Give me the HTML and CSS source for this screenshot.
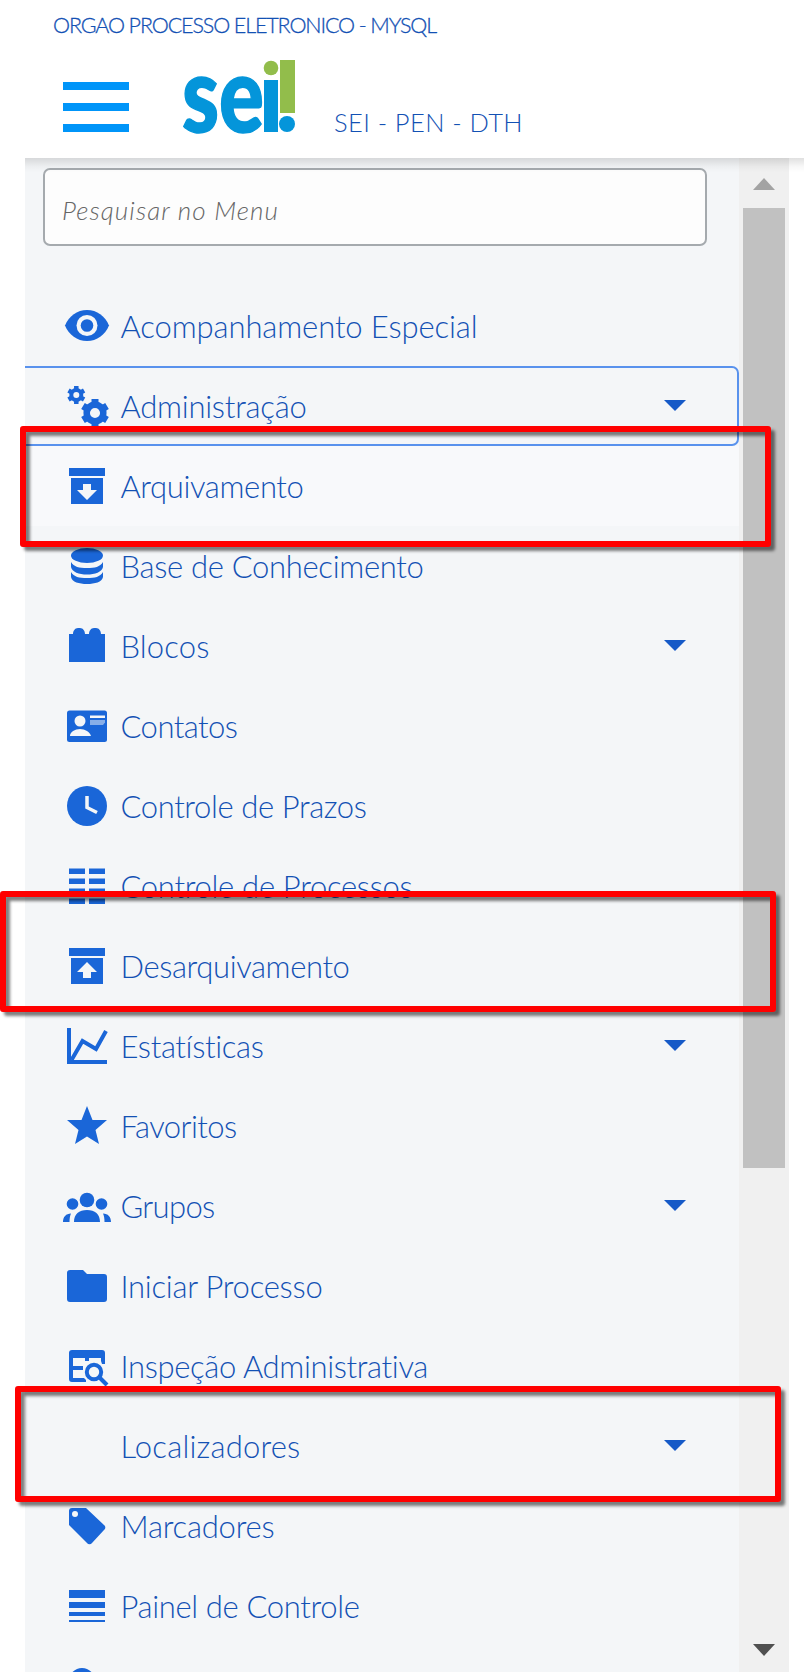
FILE: index.html
```
<!DOCTYPE html>
<html lang="pt-BR">
<head>
<meta charset="utf-8">
<title>SEI - PEN - DTH</title>
<link rel="stylesheet" href="styles.css">
</head>
<body>
<div class="page">
  <header class="header">
    <div class="org"><span data-width="383">ORGAO PROCESSO ELETRONICO - MYSQL</span></div>
    <div class="brand">
      <div class="burger"><i></i><i></i><i></i></div>
      <svg class="logo" viewBox="0 0 114 78" width="114" height="78">
        <text class="logo-text" x="-2" y="73" textLength="82" lengthAdjust="spacingAndGlyphs">se</text>
        <path fill="#0495da" d="M80 21h14v52H80z"/>
        <circle cx="87" cy="9" r="7.3" fill="#92bd4b"/>
        <path fill="#92bd4b" d="M96 1h15v53H96z"/>
        <circle cx="103" cy="65" r="8" fill="#0495da"/>
      </svg>
      <div class="system"><span data-width="189">SEI - PEN - DTH</span></div>
    </div>
  </header>
  <main class="body">
    <nav class="sidebar">
      <div class="search"><span data-width="217">Pesquisar no Menu</span></div>
      <ul class="menu">
        <li class="item"><svg class="icon" viewBox="0 0 48 48"><path d="M24 8C14 8 6 14 2 23.500C6 33 14 39 24 39S42 33 46 23.500C42 14 34 8 24 8z"/><circle class="cut" cx="24" cy="23.500" r="10.500"/><circle cx="24" cy="23.500" r="6.300"/></svg><span data-width="357">Acompanhamento Especial</span></li>
        <li class="item focused"><svg class="icon" viewBox="0 0 48 48"><circle class="ring" cx="13.300" cy="13" r="5" stroke-width="4"/><path class="teeth" stroke-width="4.500" d="M13.300 4v4M13.300 18v4M5.500 8.500l3.400 2M17.700 15.500l3.400 2M5.500 17.500l3.400-2M17.700 10.500l3.400-2"/><circle class="ring" cx="32" cy="31" r="8.300" stroke-width="6.500"/><path class="teeth" stroke-width="7" d="M32 17v6M32 39v6M20 24l5 3M39 35l5 3M20 38l5-3M39 27l5-3"/></svg><span data-width="186">Administração</span><b class="caret"></b></li>
        <li class="item active"><svg class="icon" viewBox="0 0 48 48"><path d="M6 6h36v8H6zM8 16h32v26H8z"/><path class="cut" d="M20 22h8v6h6L24 38 14 28h6z"/></svg><span data-width="183">Arquivamento</span></li>
        <li class="item"><svg class="icon" viewBox="0 0 48 48"><ellipse cx="24" cy="13.500" rx="16" ry="7.500"/><path d="M8 20c3 5 8 6 16 6s13-1 16-6v5c-1 5-8 7.500-16 7.500S9 30 8 25zM8 30c3 5 8 6 16 6s13-1 16-6v5c-1 5-8 7-16 7s-15-2-16-7z"/></svg><span data-width="303">Base de Conhecimento</span></li>
        <li class="item"><svg class="icon" viewBox="0 0 48 48"><path d="M6 12h4c0-3 2-6 5-6h2c3 0 5 3 5 6h4c0-3 2-6 5-6h2c3 0 5 3 5 6h4v28H6z"/></svg><span data-width="89">Blocos</span><b class="caret"></b></li>
        <li class="item"><svg class="icon" viewBox="0 0 48 48"><rect x="4" y="8.500" width="40" height="31.500" rx="2.500"/><circle class="cut" cx="17" cy="19" r="5.500"/><path class="cut" d="M7 34c0-4 5-7 10-7s10 3 11 7zM27 13.500h15V16H27z"/><path class="cut" opacity=".5" d="M27 18h15v2.500l-2 2.500H27z"/></svg><span data-width="117">Contatos</span></li>
        <li class="item"><svg class="icon" viewBox="0 0 48 48"><circle cx="24" cy="24" r="20"/><path class="hands" d="M24 14v11.500l10 5"/></svg><span data-width="246">Controle de Prazos</span></li>
        <li class="item"><svg class="icon" viewBox="0 0 48 48"><path d="M6 6.500h16V12H6zM26 6.500h16V12H26zM6 16.500h16V22H6zM26 16.500h16V22H26zM6 26.500h16V32H6zM26 26.500h16V32H26zM6 36.500h16V42H6zM26 36.500h16V42H26z"/></svg><span data-width="292">Controle de Processos</span></li>
        <li class="item"><svg class="icon" viewBox="0 0 48 48"><path d="M6 6h36v8H6zM8 16h32v26H8z"/><path class="cut" d="M20 36h8v-6h6L24 20 14 30h6z"/></svg><span data-width="229">Desarquivamento</span></li>
        <li class="item"><svg class="icon" viewBox="0 0 48 48"><path d="M4 6h4v32h36v4H4z"/><path class="trend" d="M8.500 38l11-19L33 27l10-18"/></svg><span data-width="144">Estatísticas</span><b class="caret"></b></li>
        <li class="item"><svg class="icon" viewBox="0 0 48 48"><path d="M24 4l5.500 14H44L32.500 28 36 42l-12-7.500L12 42l3.500-14L4 18h14.500z"/></svg><span data-width="116">Favoritos</span></li>
        <li class="item"><svg class="icon" viewBox="0 0 48 48"><circle cx="24" cy="18" r="7.300"/><circle cx="9.500" cy="22" r="5.800"/><circle cx="38.500" cy="22" r="5.800"/><path d="M11 40c0-8 5-12 13-12s13 4 13 12zM0 40c0-5 3-8.500 8-8.500-1 2-1.500 5-1.500 8.500zM48 40c0-5-3-8.500-8-8.500 1 2 1.500 5 1.500 8.500z"/></svg><span data-width="94">Grupos</span><b class="caret"></b></li>
        <li class="item"><svg class="icon" viewBox="0 0 48 48"><path d="M7 8h13l4 4h17a3 3 0 0 1 3 3v22a3 3 0 0 1-3 3H7a3 3 0 0 1-3-3V11a3 3 0 0 1 3-3z"/></svg><span data-width="202">Iniciar Processo</span></li>
        <li class="item"><svg class="icon" viewBox="0 0 48 48"><path d="M9 8h30a3 3 0 0 1 3 3v11h-3l-1-3v-3H26v3h-4v-3H10v8h10v4H10v8h11l2 2v2H9a3 3 0 0 1-3-3V11a3 3 0 0 1 3-3z"/><circle class="ring" cx="31" cy="30" r="7.200" stroke-width="4"/><path class="teeth" stroke-width="4" d="M36 35l8 8"/></svg><span data-width="308">Inspeção Administrativa</span></li>
        <li class="item"><svg class="icon" viewBox="0 0 48 48"></svg><span data-width="180">Localizadores</span><b class="caret"></b></li>
        <li class="item"><svg class="icon" viewBox="0 0 48 48"><path d="M9 6h14l18 17a3 3 0 0 1 0 5L29 41a3 3 0 0 1-5 0L6 23V9a3 3 0 0 1 3-3z"/><circle class="cut" cx="12" cy="12" r="3"/></svg><span data-width="154">Marcadores</span></li>
        <li class="item"><svg class="icon" viewBox="0 0 48 48"><path d="M6 8h36v8H6zM6 20h36v6H6zM6 30h36v4H6zM6 38h36v2H6z"/></svg><span data-width="239">Painel de Controle</span></li>
        <li class="item"><svg class="icon" viewBox="0 0 48 48"><circle class="ring" cx="19" cy="19" r="10.500" stroke-width="5"/><path class="teeth" stroke-width="5" d="M27 27l14 14"/></svg></li>
      </ul>
    </nav>
    <div class="scrollbar">
      <i class="arrow up"></i>
      <div class="thumb"></div>
      <i class="arrow down"></i>
    </div>
  </main>
  <div class="mark mark-arquivamento"></div>
  <div class="mark mark-desarquivamento"></div>
  <div class="mark mark-localizadores"></div>
</div>
<script src="fit.js"></script>
</body>
</html>
```
FILE: styles.css
```
* { box-sizing: border-box; }
body {
  margin: 0;
  background: #fff;
  color: #1351b4;
  font-family: Lato, "Open Sans", sans-serif;
  font-weight: 300;
}
.page {
  position: relative;
  width: 804px;
  height: 1672px;
  overflow: hidden;
}
.header { height: 158px; }
.org {
  height: 52px;
  padding: 9px 0 0 53px;
  font-size: 21.5px;
  line-height: 32px;
  white-space: nowrap;
  -webkit-text-stroke: .3px;
}
.brand {
  display: flex;
  align-items: flex-start;
  height: 106px;
  padding-left: 63px;
}
.burger {
  display: flex;
  flex-direction: column;
  gap: 13px;
  width: 66px;
  margin: 30px 55px 0 0;
}
.burger i { height: 8px; background: #0095f9; }
.logo { display: block; margin-top: 7px; overflow: visible; }
.logo-text {
  font: 900 104px Lato, sans-serif;
  fill: #0495da;
  stroke: #0495da;
  stroke-width: 1.5px;
}
.system {
  margin: 53px 0 0 36px;
  font-size: 25.5px;
  line-height: 34px;
  white-space: nowrap;
}
.body {
  position: relative;
  display: flex;
  height: 1514px;
  padding-left: 25px;
}
.body::before {
  content: "";
  position: absolute;
  inset: 0 0 auto 25px;
  height: 14px;
  background: linear-gradient(rgba(0,0,0,.12), rgba(0,0,0,.03) 60%, transparent);
}
.sidebar {
  width: 714px;
  padding-top: 10px;
  background: #f4f6f8;
  overflow: hidden;
}
.search {
  width: 664px;
  height: 78px;
  margin: 0 0 40px 18px;
  padding: 23px 17px 0;
  border: 2px solid #a5aaae;
  border-radius: 7px;
  background: #fdfdfd;
  color: #666;
  font-size: 26px;
  line-height: 34px;
  font-style: italic;
  white-space: nowrap;
}
.menu { margin: 0; padding: 0; list-style: none; }
.item {
  display: flex;
  align-items: center;
  height: 80px;
  padding: 0 53px 0 38px;
  font-size: 31px;
  line-height: 40px;
  white-space: nowrap;
}
.item span { margin: -1px 0 0 9.500px; }
.active { background: #f8f9fb; }
.focused {
  padding: 0 51px 0 38px;
  border: solid #5992ed;
  border-width: 2px 2px 2px 0;
  border-radius: 0 7px 7px 0;
}
.icon {
  flex: none;
  width: 48px;
  height: 48px;
  fill: #1a66d8;
}
.icon .cut { fill: #f4f6f8; }
.ring, .teeth, .trend { fill: none; stroke: #1a66d8; }
.trend { stroke-width: 4; }
.hands { fill: none; stroke: #f4f6f8; stroke-width: 3.5; }
.caret {
  margin: -2px 0 0 auto;
  border: solid transparent;
  border-width: 11px 11px 0;
  border-top-color: #1559c7;
}
.scrollbar {
  display: flex;
  flex-direction: column;
  align-items: center;
  width: 50px;
  padding: 20px 0 16px;
  background: #f0f0f0;
}
.arrow { border: solid transparent; }
.up { border-width: 0 11px 12px; border-bottom-color: #a3a3a3; }
.down { margin-top: auto; border-width: 12px 11px 0; border-top-color: #505050; }
.thumb {
  width: 42px;
  height: 960px;
  margin-top: 18px;
  background: #c1c1c1;
}
.mark {
  position: absolute;
  border: 6px solid #f00;
  border-radius: 3px;
  filter: drop-shadow(4px 4px 1.5px rgba(0,0,0,.5));
}
.mark-arquivamento { left: 20px; top: 426px; width: 751px; height: 121px; }
.mark-desarquivamento { left: 0; top: 891px; width: 776px; height: 121px; }
.mark-localizadores { left: 15px; top: 1386px; width: 766px; height: 116px; }
```
FILE: fit.js
```
document.querySelectorAll('[data-width]').forEach(function (el) {
  var extra = Number(el.dataset.width) - el.getBoundingClientRect().width;
  el.style.letterSpacing = (extra / el.textContent.length).toFixed(3) + 'px';
});
```
